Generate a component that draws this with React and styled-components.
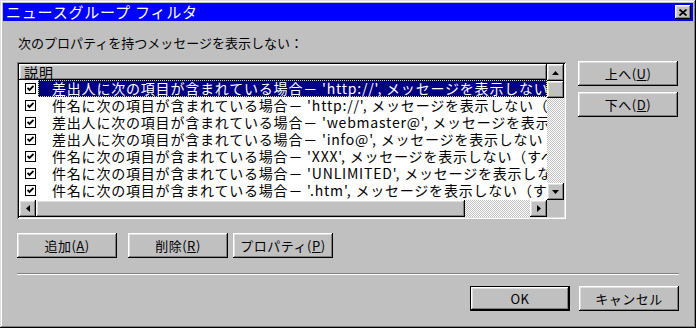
import React from 'react'
import styled, { createGlobalStyle, css } from 'styled-components'

const GlobalStyle = createGlobalStyle`
  html, body {
    margin: 0;
    padding: 0;
    background: #c0c0c0;
    overflow: hidden;
  }
  body {
    font-family: "Noto Sans CJK JP", "Liberation Sans", sans-serif;
    color: #000;
  }
`

const raised = css`
  background: #c0c0c0;
  box-shadow: inset -1px -1px #000, inset 1px 1px #fff,
    inset -2px -2px #808080, inset 2px 2px #dfdfdf;
`

const dither = css`
  background-color: #fff;
  background-image: conic-gradient(#c0c0c0 25%, #fff 0 50%, #c0c0c0 0 75%, #fff 0);
  background-size: 2px 2px;
`

const Window = styled.div`
  width: 696px;
  height: 328px;
  box-sizing: border-box;
  padding: 3px;
  display: flex;
  flex-direction: column;
  background: #c0c0c0;
  box-shadow: inset -1px -1px #000, inset 1px 1px #dfdfdf,
    inset -2px -2px #808080, inset 2px 2px #fff;
`

const TitleBar = styled.div`
  height: 18px;
  background: #0000ff;
  display: flex;
  align-items: center;
  justify-content: space-between;
`

const TitleText = styled.span`
  color: #fff;
  font-size: 15px;
  line-height: 18px;
  letter-spacing: 0.8px;
  padding-left: 3px;
  white-space: nowrap;
`

const CloseButton = styled.div`
  ${raised};
  width: 16px;
  height: 14px;
  margin-right: 2px;
  display: flex;
  align-items: center;
  justify-content: center;
`

const Body = styled.div`
  flex: 1;
  padding: 14px 14px 0;
  display: flex;
  flex-direction: column;
`

const Caption = styled.div`
  font-size: 13px;
  line-height: 16px;
  height: 16px;
  margin-bottom: 11px;
  padding-left: 1px;
  white-space: nowrap;
`

const MainRow = styled.div`
  display: flex;
  gap: 12px;
`

const ListBox = styled.div`
  width: 549px;
  height: 157px;
  box-sizing: border-box;
  padding: 2px;
  background: #fff;
  box-shadow: inset 1px 1px #808080, inset -1px -1px #fff,
    inset 2px 2px #000, inset -2px -2px #dfdfdf;
  display: grid;
  grid-template-columns: 1fr 17px;
  grid-template-rows: 1fr 17px;
`

const ListView = styled.div`
  overflow: hidden;
  background: #fff;
  min-width: 0;
`

const Header = styled.div`
  ${raised};
  height: 16px;
  font-size: 14px;
  line-height: 16px;
  letter-spacing: 1px;
  padding-left: 5px;
  display: flex;
  align-items: center;
`

const Row = styled.div`
  height: 17px;
  display: flex;
  align-items: center;
`

const Check = styled.div`
  width: 11px;
  height: 11px;
  box-sizing: border-box;
  margin-left: 6px;
  flex: none;
  border: 1px solid #000;
  background: #fff;
  display: flex;
  align-items: center;
  justify-content: center;
`

const RowText = styled.div`
  flex: 1;
  min-width: 0;
  margin-left: 2px;
  padding-left: 14px;
  font-size: 14px;
  line-height: 17px;
  height: 17px;
  letter-spacing: 0.8px;
  white-space: nowrap;
  overflow: hidden;
  ${({ $selected }) =>
    $selected &&
    `
    background: #000080;
    color: #fff;
    outline: 1px dotted #d8d890;
    outline-offset: -1px;
  `}
`

const VScroll = styled.div`
  display: flex;
  flex-direction: column;
`

const HScroll = styled.div`
  display: flex;
  min-width: 0;
`

const ScrollButton = styled.div`
  ${raised};
  width: 17px;
  height: 17px;
  flex: none;
  display: flex;
  align-items: center;
  justify-content: center;
`

const Thumb = styled.div`
  ${raised};
  flex: none;
  width: ${({ $w }) => $w || 17}px;
  height: ${({ $h }) => $h || 17}px;
`

const Track = styled.div`
  ${dither};
  flex: 1;
`

const Corner = styled.div`
  background: #c0c0c0;
`

const SideButtons = styled.div`
  display: flex;
  flex-direction: column;
  gap: 6px;
  margin-top: -1px;
`

const Button = styled.div`
  ${raised};
  width: ${({ $w }) => $w || 100}px;
  height: 25px;
  box-sizing: border-box;
  margin-left: ${({ $ml }) => $ml || 0}px;
  display: flex;
  align-items: center;
  justify-content: center;
  font-size: 13px;
  line-height: 16px;
  letter-spacing: 0.5px;
  white-space: nowrap;
  ${({ $default }) =>
    $default &&
    `
    border: 1px solid #000;
  `}
  u {
    text-decoration: underline;
    text-underline-offset: 1px;
  }
`

const ActionRow = styled.div`
  display: flex;
  margin-top: 14px;
`

const Separator = styled.div`
  margin-top: 15px;
  border-top: 1px solid #808080;
  border-bottom: 1px solid #fff;
`

const Footer = styled.div`
  display: flex;
  justify-content: flex-end;
  gap: 9px;
  margin-top: 11px;
`

const Arrow = ({ dir }) => {
  const pts = {
    up: '3.5,0 7,4 0,4',
    down: '0,0 7,0 3.5,4',
    left: '4,0 4,7 0,3.5',
    right: '0,0 0,7 4,3.5',
  }[dir]
  const vertical = dir === 'up' || dir === 'down'
  return (
    <svg width={vertical ? 7 : 4} height={vertical ? 4 : 7} viewBox={vertical ? '0 0 7 4' : '0 0 4 7'}>
      <polygon points={pts} fill="#000" />
    </svg>
  )
}

const CheckMark = () => (
  <svg width="7" height="7" viewBox="0 0 7 7">
    <polyline points="0.5,3 2.5,5 6.5,1" fill="none" stroke="#000" strokeWidth="1.8" />
  </svg>
)

const rules = [
  ['差出人', 'http://'],
  ['件名', 'http://'],
  ['差出人', 'webmaster@'],
  ['差出人', 'info@'],
  ['件名', 'XXX'],
  ['件名', 'UNLIMITED'],
  ['件名', '.htm'],
]

function App() {
  return (
    <>
      <GlobalStyle />
      <Window>
        <TitleBar>
          <TitleText>ニュースグループ フィルタ</TitleText>
          <CloseButton>
            <svg width="8" height="7" viewBox="0 0 8 7">
              <path d="M0.5 0.5 L7.5 6.5 M7.5 0.5 L0.5 6.5" stroke="#000" strokeWidth="1.8" />
            </svg>
          </CloseButton>
        </TitleBar>
        <Body>
          <Caption>次のプロパティを持つメッセージを表示しない：</Caption>
          <MainRow>
            <ListBox>
              <ListView>
                <Header>説明</Header>
                {rules.map(([field, value], i) => (
                  <Row key={i}>
                    <Check>
                      <CheckMark />
                    </Check>
                    <RowText $selected={i === 0}>
                      {field}に次の項目が含まれている場合－ '{value}', メッセージを表示しない（すべてのアカウント）
                    </RowText>
                  </Row>
                ))}
              </ListView>
              <VScroll>
                <ScrollButton>
                  <Arrow dir="up" />
                </ScrollButton>
                <Thumb />
                <Track />
                <ScrollButton>
                  <Arrow dir="down" />
                </ScrollButton>
              </VScroll>
              <HScroll>
                <ScrollButton>
                  <Arrow dir="left" />
                </ScrollButton>
                <Thumb $w={429} />
                <Track />
                <ScrollButton>
                  <Arrow dir="right" />
                </ScrollButton>
              </HScroll>
              <Corner />
            </ListBox>
            <SideButtons>
              <Button>
                上へ(<u>U</u>)
              </Button>
              <Button>
                下へ(<u>D</u>)
              </Button>
            </SideButtons>
          </MainRow>
          <ActionRow>
            <Button>
              追加(<u>A</u>)
            </Button>
            <Button $ml={11}>
              削除(<u>R</u>)
            </Button>
            <Button $ml={5}>
              プロパティ(<u>P</u>)
            </Button>
          </ActionRow>
          <Separator />
          <Footer>
            <Button $default>OK</Button>
            <Button>キャンセル</Button>
          </Footer>
        </Body>
      </Window>
    </>
  )
}

export default App
